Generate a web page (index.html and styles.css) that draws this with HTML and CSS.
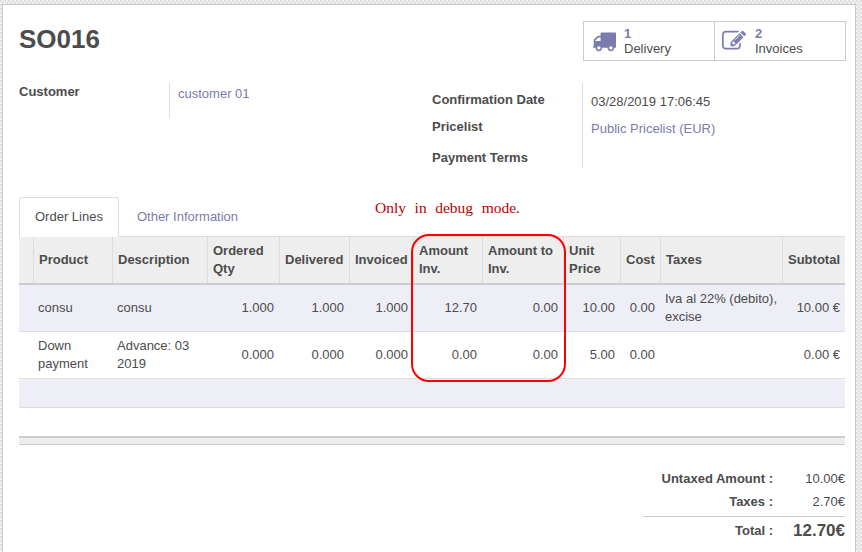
FILE: index.html
```html
<!DOCTYPE html>

<html>
<head>
  <meta http-equiv="Content-Type" content="text/html; charset=UTF-8">
  <title>SO016</title>

  <link rel="stylesheet" href="styles.css">
</head>
<body>
  <div class="sheet">
    <div class="top">
      <h1 class="name">SO016</h1>
      <div class="buttons">
        <a class="stat">
          <svg class="stat-icon" viewBox="0 0 1792 1792"><path d="M640 1408q0-52-38-90t-90-38-90 38-38 90 38 90 90 38 90-38 38-90zm-384-512h384v-256h-158q-13 0-22 9l-195 195q-9 9-9 22v30zm1280 512q0-52-38-90t-90-38-90 38-38 90 38 90 90 38 90-38 38-90zm256-1088v1024q0 15-4 26.5t-13.5 18.5-16.5 11.5-23.5 6-22.5 2-25.5 0-22.5-.5q0 106-75 181t-181 75-181-75-75-181h-384q0 106-75 181t-181 75-181-75-75-181h-64q-3 0-22.5.5t-25.5 0-22.5-2-23.5-6-16.5-11.5-13.5-18.5-4-26.5q0-26 19-45t45-19v-320q0-8-.5-35t0-38 2.5-34.5 6.5-37 14-30.5 22.5-30l198-198q19-19 50.5-32t58.5-13h160v-192q0-26 19-45t45-19h1024q26 0 45 19t19 45z"/></svg>
          <span class="stat-text"><b>1</b>Delivery</span>
        </a>
        <a class="stat">
          <svg class="stat-icon" viewBox="0 0 1792 1792"><path d="M888 1184l116-116-152-152-116 116v56h96v96h56zm440-720q-16-16-33 1l-350 350q-17 17-1 33t33-1l350-350q17-17 1-33zm80 594v190q0 119-84.5 203.5t-203.5 84.5h-832q-119 0-203.5-84.5t-84.5-203.5v-832q0-119 84.5-203.5t203.5-84.5h832q63 0 117 25 15 7 18 23 3 17-9 29l-49 49q-14 14-32 8-23-6-45-6h-832q-66 0-113 47t-47 113v832q0 66 47 113t113 47h832q66 0 113-47t47-113v-126q0-13 9-22l64-64q15-15 35-7t20 29zm-96-738l288 288-672 672h-288v-288zm444 132l-92 92-288-288 92-92q28-28 68-28t68 28l152 152q28 28 28 68t-28 68z"/></svg>
          <span class="stat-text"><b>2</b>Invoices</span>
        </a>
      </div>
    </div>

    <div class="group">
      <div class="group-col">
        <div class="label">Customer</div>
        <div class="values values-left"><a>customer 01</a></div>
      </div>
      <div class="group-col group-col-right">
        <div class="labels">
          <div class="label label-date">Confirmation Date</div>
          <div class="label label-list">Pricelist</div>
          <div class="label label-terms">Payment Terms</div>
        </div>
        <div class="values values-right">
          <div class="value-date">03/28/2019 17:06:45</div>
          <div class="value-list"><a>Public Pricelist (EUR)</a></div>
        </div>
      </div>
    </div>

    <div class="tabs">
      <a class="tab tab-active">Order Lines</a>
      <a class="tab">Other Information</a>
    </div>

    <table class="lines">
      <colgroup>
        <col class="c-handle"><col class="c-product"><col class="c-desc"><col class="c-ordered"><col class="c-delivered"><col class="c-invoiced"><col class="c-amount"><col class="c-amount-to"><col class="c-price"><col class="c-cost"><col class="c-taxes"><col class="c-subtotal">
      </colgroup>
      <thead>
        <tr>
          <th></th><th>Product</th><th>Description</th><th>Ordered Qty</th><th>Delivered</th><th>Invoiced</th><th>Amount Inv.</th><th>Amount to Inv.</th><th>Unit Price</th><th>Cost</th><th>Taxes</th><th>Subtotal</th>
        </tr>
      </thead>
      <tbody>
        <tr class="odd">
          <td></td><td>consu</td><td>consu</td><td class="num">1.000</td><td class="num">1.000</td><td class="num">1.000</td><td class="num">12.70</td><td class="num">0.00</td><td class="num">10.00</td><td class="num">0.00</td><td>Iva al 22% (debito), excise</td><td class="num">10.00 €</td>
        </tr>
        <tr>
          <td></td><td>Down payment</td><td>Advance: 03 2019</td><td class="num">0.000</td><td class="num">0.000</td><td class="num">0.000</td><td class="num">0.00</td><td class="num">0.00</td><td class="num">5.00</td><td class="num">0.00</td><td></td><td class="num">0.00 €</td>
        </tr>
        <tr class="odd filler">
          <td colspan="12"></td>
        </tr>
      </tbody>
    </table>

    <div class="lines-foot"></div>

    <div class="totals">
      <div class="total-row"><span class="total-label">Untaxed Amount :</span><span class="total-value">10.00€</span></div>
      <div class="total-row"><span class="total-label">Taxes :</span><span class="total-value">2.70€</span></div>
      <div class="total-row total-grand"><span class="total-label">Total :</span><span class="total-value">12.70€</span></div>
    </div>

    <!-- hand drawn note on top of the screenshot -->
    <div class="note">Only in debug mode.</div>
    <div class="note-box"></div>
  </div>
</body>
</html>
```

FILE: styles.css
```css
/* reset things */
* {
  margin: 0; padding: 0;
  box-sizing: border-box;
}
html, body {
  width: 100%;
  height: 100%;
  overflow: hidden;
}
body {
  padding: 4px 6px 0 2px;
  font: normal 13px/18px "Liberation Sans", Arial, sans-serif;
  color: #4c4c4c;
  background-color: #e9e9e9;
  background-image: conic-gradient(#f2f2f2 25%, #dedede 0 50%, #f2f2f2 0 75%, #dedede 0);
  background-size: 4px 4px;
}
a {
  color: #7c7bad;
}

.sheet {
  position: relative;
  height: 548px;
  overflow: hidden;
  padding: 16px 10px 0 16px;
  background-color: #fff;
  border: 1px solid #c8c8d3;
  border-bottom: 0;
}

.top {
  display: flex;
  justify-content: space-between;
  height: 62px;
}
  .name {
    padding-top: 3px;
    font-size: 26px;
    line-height: 30px;
    font-weight: bold;
  }
  .buttons {
    display: flex;
    height: 40px;
    margin-right: -1px;
    border: 1px solid #ccc;
  }
  .stat {
    display: flex;
    align-items: center;
    width: 130px;
    padding-left: 8px;
    color: #4c4c4c;
  }
  .stat + .stat {
    width: 131px;
    padding-left: 7px;
    border-left: 1px solid #ccc;
  }
    .stat-icon {
      width: 24px;
      height: 24px;
      margin-right: 8px;
      fill: #7c7bad;
    }
    .stat + .stat .stat-icon {
      margin-right: 9px;
    }
    .stat-text {
      display: block;
      line-height: 15px;
    }
    .stat-text b {
      display: block;
      color: #7c7bad;
    }

.group {
  display: flex;
  height: 114px;
}
  .group-col {
    display: flex;
    width: 413px;
  }
  .group-col-right {
    flex: 1;
  }
  .label {
    width: 150px;
    font-weight: bold;
  }
  .values {
    padding-left: 8px;
    border-left: 1px solid #ddd;
  }
  .values-left {
    height: 35px;
    padding-top: 2px;
  }
  .values-right {
    height: 85px;
    padding-top: 10px;
  }
  .labels .label-date {
    padding-top: 8px;
  }
  .labels .label-list {
    padding-top: 9px;
  }
  .labels .label-terms {
    padding-top: 13px;
  }
  .value-list {
    padding-top: 9px;
  }

.tabs {
  display: flex;
  height: 40px;
  border-bottom: 1px solid #ddd;
}
  .tab {
    padding: 10px 15px 0;
    height: 40px;
    border: 1px solid transparent;
    border-radius: 3px 3px 0 0;
  }
  .tab + .tab {
    margin-left: 2px;
  }
  .tab-active {
    color: #4c4c4c;
    background-color: #fff;
    border-color: #ddd #ddd #fff;
  }

.lines {
  width: 826px;
  table-layout: fixed;
  border-collapse: collapse;
}
  .c-handle { width: 14px; }
  .c-product { width: 79px; }
  .c-desc { width: 95px; }
  .c-ordered { width: 72px; }
  .c-delivered { width: 70px; }
  .c-invoiced { width: 64px; }
  .c-amount { width: 69px; }
  .c-amount-to { width: 81px; }
  .c-price { width: 57px; }
  .c-cost { width: 40px; }
  .c-taxes { width: 122px; }
  .c-subtotal { width: 63px; }
  .lines th {
    height: 47px;
    padding: 4px 5px 4px 5.5px;
    text-align: left;
    background-color: #eee;
    border-bottom: 2px solid #ccc;
    border-left: 1px solid #ddd;
  }
  .lines th:first-child {
    border-left: 0;
  }
  .lines td {
    height: 47px;
    padding: 4px 5px;
    border-bottom: 1px solid #ddd;
  }
  .lines .num {
    text-align: right;
  }
  .lines .odd td {
    background-color: #eeeef6;
  }
  .lines .filler td {
    height: 29px;
    padding: 0;
  }

.lines-foot {
  height: 9px;
  margin-top: 28px;
  background-color: #eee;
  border-top: 2px solid #ccc;
  border-bottom: 1px solid #ccc;
}

.totals {
  width: 202px;
  margin: 23px 0 0 auto;
}
  .total-row {
    display: flex;
    justify-content: flex-end;
    height: 23px;
    align-items: center;
  }
  .total-label {
    font-weight: bold;
  }
  .total-value {
    width: 72px;
    text-align: right;
  }
  .total-grand {
    height: 28px;
    margin-top: 2px;
    padding-top: 1px;
    border-top: 1px solid #ccc;
  }
  .total-grand .total-value {
    font-size: 17px;
    font-weight: bold;
  }

.note {
  position: absolute;
  top: 194px;
  left: 372px;
  font: normal 15.5px/18px "Liberation Serif", "Times New Roman", serif;
  word-spacing: 4.7px;
  color: #c00000;
}
.note-box {
  position: absolute;
  top: 229px;
  left: 408px;
  width: 155px;
  height: 148px;
  border: 2px solid #f00;
  border-radius: 18px;
}
```
